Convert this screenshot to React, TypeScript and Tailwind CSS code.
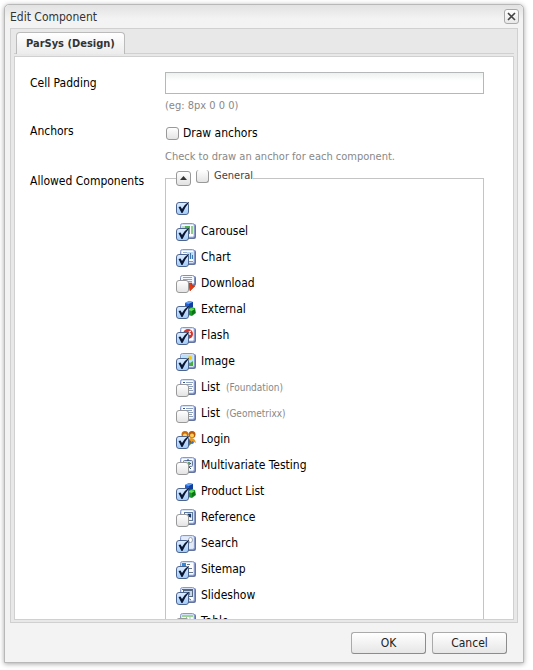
import type { ReactNode } from "react";

type IconName =
  | "carousel" | "chart" | "download" | "cubes" | "flash" | "image" | "list"
  | "login" | "testing" | "reference" | "search" | "sitemap" | "slideshow" | "table";

type Item = { label: string; note?: string; icon?: IconName; checked?: boolean };

const items: Item[] = [
  { label: "", checked: true },
  { label: "Carousel", icon: "carousel", checked: true },
  { label: "Chart", icon: "chart", checked: true },
  { label: "Download", icon: "download" },
  { label: "External", icon: "cubes", checked: true },
  { label: "Flash", icon: "flash", checked: true },
  { label: "Image", icon: "image", checked: true },
  { label: "List", note: "(Foundation)", icon: "list" },
  { label: "List", note: "(Geometrixx)", icon: "list" },
  { label: "Login", icon: "login", checked: true },
  { label: "Multivariate Testing", icon: "testing" },
  { label: "Product List", icon: "cubes", checked: true },
  { label: "Reference", icon: "reference" },
  { label: "Search", icon: "search", checked: true },
  { label: "Sitemap", icon: "sitemap", checked: true },
  { label: "Slideshow", icon: "slideshow", checked: true },
  { label: "Table", icon: "table" },
];

function Frame({ children }: { children: ReactNode }) {
  return (
    <>
      <rect x="1" y="1" width="15" height="15" rx="2" fill="#6573a0" />
      <rect x="0.5" y="0.5" width="14" height="14" rx="2" fill="#d5e2f8" stroke="#8a9ac8" />
      <rect x="2" y="2" width="11" height="11" fill="#fff" />
      {children}
    </>
  );
}

const glyphs: Record<IconName, ReactNode> = {
  carousel: (
    <Frame>
      <rect x="2" y="3" width="3" height="8" fill="#bfe0bd" />
      <rect x="5" y="3" width="5" height="8" fill="#4db14f" />
      <rect x="11" y="3" width="2" height="8" fill="#8fce8b" />
    </Frame>
  ),
  chart: (
    <Frame>
      <path d="M3 3.5h4M3 5.5h4" stroke="#9bb1cf" />
      <rect x="7" y="3" width="6" height="7" fill="#bcdcf4" />
      <path d="M8.5 10V7M10.5 10V4M12.500 10V6" stroke="#3978b5" />
      <path d="M5 12.5h8" stroke="#80a870" />
    </Frame>
  ),
  download: (
    <>
      <rect x="1" y="1" width="15" height="10" rx="2" fill="#6573a0" />
      <rect x="0.5" y="0.5" width="14" height="9" rx="2" fill="#f4f8ff" stroke="#7f8fba" />
      <path d="M3 2.5h9M3 4.5h9M3 6.5h9" stroke="#94a1ba" />
      <path d="M7 8h5v3h3l-5 5-1-4H7z" fill="#e63a12" stroke="#b72509" strokeWidth="0.5" />
    </>
  ),
  cubes: (
    <>
      <path d="M5 2l4-2 4 1v5L9 8 5 7z" fill="#1f5ed2" />
      <path d="M5 2l4-2 4 1-4 2z" fill="#69a4f5" />
      <path d="M9 3l4-2v5L9 8z" fill="#123f9d" />
      <path d="M1 7l3-1 4 1v5l-4 1-3-1z" fill="#2b6edb" />
      <path d="M7 9l4-3 4 1 1 5-4 3-4-1z" fill="#189923" />
      <path d="M8 9l3-2 4 1-3 2z" fill="#6be05b" />
      <path d="M12 10l3-2v4l-3 2z" fill="#0c7418" />
    </>
  ),
  flash: (
    <Frame>
      <circle cx="8" cy="7" r="5" fill="#d83228" />
      <path d="M6 10q2 0 2-2.500T11 4M8 7h3" fill="none" stroke="#fff" strokeWidth="1.300" />
    </Frame>
  ),
  image: (
    <Frame>
      <rect x="2" y="2" width="11" height="11" fill="#b6e3fc" />
      <circle cx="10" cy="5" r="2" fill="#ffc400" />
      <path d="M2 13V8l3-2 5 4 3-2v5z" fill="#4aab41" />
    </Frame>
  ),
  list: (
    <Frame>
      <path d="M3 3.500h2M3 6.500h2M3 9.500h2M3 12h2" stroke="#34568f" />
      <path d="M6 3.500h7M6 5.500h6M6 7.500h7M6 9.500h6M6 11.500h7" stroke="#8fa0bd" />
    </Frame>
  ),
  login: (
    <>
      <circle cx="5" cy="3.500" r="3.500" fill="#c86c10" />
      <circle cx="5" cy="4.500" r="2" fill="#ffd36b" />
      <circle cx="12" cy="3.500" r="3.500" fill="#b85a0c" />
      <circle cx="12" cy="4.500" r="2" fill="#ffcf5c" />
      <path d="M7 13q0-6 4-6t5 5l-2-1-2 2z" fill="#e79a20" />
      <path d="M5 9l4-1 3 4-3 3-4-2z" fill="#2ba02f" />
      <path d="M8 9l3 1-1 3z" fill="#e3281c" />
      <path d="M12 10l2 1-1 2-2-1z" fill="#3470d1" />
    </>
  ),
  testing: (
    <Frame>
      <rect x="3.500" y="3.500" width="9" height="6" rx="1" fill="#dce6f2" stroke="#647a9c" />
      <path d="M8 2v2M5 6.500h2M10 6.500h1M5 12l2-2M11 12l-2-2" stroke="#334d74" />
      <rect x="8" y="5" width="2" height="3" fill="#5a9c6a" />
    </Frame>
  ),
  reference: (
    <Frame>
      <rect x="4.500" y="3.500" width="8" height="8" fill="#eef5ff" stroke="#5e789e" />
      <path d="M6.500 9.500l4-4M7.500 5.500h3v3" fill="none" stroke="#1c3966" strokeWidth="1.300" />
    </Frame>
  ),
  search: (
    <Frame>
      <rect x="2" y="2" width="11" height="11" fill="#e4ebf6" />
      <path d="M6 11l4-5" stroke="#77808e" strokeWidth="2" />
      <ellipse cx="10.500" cy="5" rx="2" ry="2.500" fill="#fff" stroke="#9ba5b5" />
    </Frame>
  ),
  sitemap: (
    <Frame>
      <rect x="2" y="2" width="4" height="3" fill="#3188d6" />
      <path d="M4.500 5v6.500H7M4.500 7.500H7" fill="none" stroke="#778899" />
      <path d="M7 3.500h3M8 7.500h4M8 11.500h5" stroke="#67768e" />
    </Frame>
  ),
  slideshow: (
    <Frame>
      <rect x="3.500" y="3.500" width="9" height="6" fill="#c8d8e8" stroke="#576881" />
      <path d="M2 2.500h11M8 10v2M5 13l3-2 3 2" fill="none" stroke="#56667d" />
      <rect x="6" y="5" width="4" height="3" fill="#5f8aae" />
    </Frame>
  ),
  table: (
    <Frame>
      <rect x="2" y="2" width="11" height="2" fill="#9bd694" />
      <path d="M2 6.500h11M2 9.500h11M6.500 4v9M10 4v9" stroke="#a9b9cf" />
    </Frame>
  ),
};

function Tick({ id, checked = false, label, border = "border" }: { id: string; checked?: boolean; label?: string; border?: string }) {
  return (
    <span className="relative block size-[13px] shrink-0">
      <input
        id={id}
        type="checkbox"
        defaultChecked={checked}
        aria-label={label}
        className={`${border} peer block size-[13px] appearance-none rounded-[3px] border-[#999] bg-linear-to-b from-white to-[#e4e4e4] checked:border-[#4c6590] checked:from-[#dcecff] checked:to-[#a2cdfa]`}
      />
      <svg viewBox="0 0 14 14" className="pointer-events-none absolute -top-px left-0 hidden size-[14px] peer-checked:block" aria-hidden="true">
        <path d="M2.500 6l2-0.500 1.500 2.500q3-5 6.500-7l0.500 0.500Q9 6 6.500 12H5.500z" fill="#0b1633" />
      </svg>
    </span>
  );
}

function ComponentRow({ item, index }: { item: Item; index: number }) {
  const id = `component-${index}`;
  return (
    <li className="flex h-[26px] items-center gap-[5px]">
      <span className="relative block h-[18px] w-5 shrink-0">
        {item.icon && (
          <svg viewBox="0 0 16 16" className="ml-1 block size-4" aria-hidden="true">
            {glyphs[item.icon]}
          </svg>
        )}
        <span className="absolute bottom-0 left-0">
          <Tick id={id} checked={item.checked} label={item.label ? undefined : "All components"} />
        </span>
      </span>
      {item.label && (
        <label htmlFor={id} className="pb-[2px]">
          {item.label}
          {item.note && <span className="ml-[6px] text-[10px] text-[#888]">{item.note}</span>}
        </label>
      )}
    </li>
  );
}

const dialogButton =
  "h-[22px] w-[75px] rounded-[3px] border border-[#aaa] border-r-[#8c8c8c] border-b-[#8c8c8c] bg-linear-to-b from-white to-[#e6e6e6] text-[12px] leading-4 text-[#222]";

export default function App() {
  return (
    <div className="h-screen bg-white pt-1 pr-[9px] pb-[7px] pl-1 font-['DejaVu_Sans_Condensed','DejaVu_Sans',sans-serif] text-[12px] leading-4 text-black">
      <section
        role="dialog"
        aria-labelledby="title"
        className="flex h-full flex-col rounded-t-[5px] border border-[#b8b8b8] bg-[#f3f3f3] shadow-[0_1px_5px_rgba(0,0,0,0.35)]"
      >
        <header className="flex h-[23px] shrink-0 items-center justify-between rounded-t-[5px] bg-linear-to-b from-[#e2e2e2] to-[#f3f3f3] to-60% pr-1 pl-[5px]">
          <h1 id="title" className="text-[#333]">Edit Component</h1>
          <button type="button" aria-label="Close" className="flex size-[15px] items-center justify-center rounded-[3px] border border-[#aaa] bg-linear-to-b from-white to-[#e9e9e9]">
            <svg viewBox="0 0 9 9" className="size-[9px]" aria-hidden="true">
              <path d="M1 1l7 7M8 1L1 8" stroke="#444" strokeWidth="1.600" />
            </svg>
          </button>
        </header>

        <div className="mx-[5px] flex min-h-0 flex-1 flex-col border border-[#d0d0d0] bg-[#e8e8e8] px-[3px] pb-[2px]">
          <div role="tablist" className="flex h-[25px] shrink-0 items-end border-b border-[#d0d0d0] pl-[2px]">
            <button type="button" role="tab" aria-selected="true" className="-mb-px h-[22px] rounded-t-[4px] border border-b-0 border-[#bbb] bg-linear-to-b from-white to-[#ececec] px-[9px] text-[11px] leading-4 font-bold text-[#333]">
              ParSys (Design)
            </button>
          </div>
          <div className="mt-[2px] min-h-0 flex-1 overflow-hidden border border-[#d0d0d0] bg-white pt-[15px] pr-[29px] pl-[15px]">
            <form className="grid grid-cols-[135px_1fr]">
              <label htmlFor="padding" className="pt-[3px]">Cell Padding</label>
              <div className="h-[51px]">
                <input id="padding" type="text" className="block h-[22px] w-full border border-[#b5b8b8] bg-white bg-linear-to-b from-[#edf1f0] to-white to-40% px-1" />
                <p className="mt-1 text-[11px] text-[#888]">(eg: 8px 0 0 0)</p>
              </div>

              <span>Anchors</span>
              <div className="h-[47px]">
                <div className="flex items-center gap-1 pt-[2px] pl-px">
                  <Tick id="anchors" />
                  <label htmlFor="anchors">Draw anchors</label>
                </div>
                <p className="mt-2 text-[11px] text-[#888]">Check to draw an anchor for each component.</p>
              </div>

              <span className="pt-[3px]">Allowed Components</span>
              <fieldset className="border border-[#c4c4c4] px-[10px] pb-3">
                <legend className="flex h-4 items-center text-[11px] text-[#444]">
                  <button type="button" aria-label="Collapse" className="mr-[5px] flex size-[15px] items-center justify-center rounded-[3px] border border-[#999] bg-linear-to-b from-white to-[#e2e2e2]">
                    <svg viewBox="0 0 7 4" className="h-1 w-[7px]" aria-hidden="true"><path d="M0 4l3.500-4L7 4z" fill="#333" /></svg>
                  </button>
                  <span className="flex items-center gap-[5px] pb-1">
                    <Tick id="general" border="border border-t-0" />
                    <label htmlFor="general">General</label>
                  </span>
                </legend>
                <ul className="pt-[7px]">
                  {items.map((item, i) => <ComponentRow key={i} item={item} index={i} />)}
                </ul>
              </fieldset>
            </form>
          </div>
        </div>

        <footer className="flex h-[39px] shrink-0 items-center justify-end gap-[6px] pr-4">
          <button type="button" className={dialogButton}>OK</button>
          <button type="button" className={dialogButton}>Cancel</button>
        </footer>
      </section>
    </div>
  );
}
